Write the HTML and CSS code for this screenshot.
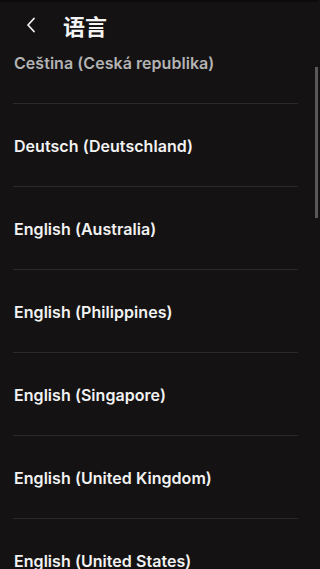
FILE: index.html
```html
<!DOCTYPE html>
<html lang="zh">
<head>
<meta charset="utf-8">
<title>语言</title>
<link rel="stylesheet" href="styles.css">
</head>
<body>
<div class="screen">
  <header class="header">
    <button class="back" aria-label="返回">
      <svg width="10" height="16" viewBox="0 0 10 16"><path d="M8 1.5 L2 8 L8 14.5" fill="none" stroke="#f2f2f2" stroke-width="1.8" stroke-linecap="round" stroke-linejoin="round"/></svg>
    </button>
    <h1 class="title">语言</h1>
  </header>
  <ul class="list">
    <li class="row row-first faded">Ceština (Ceská republika)</li>
    <li class="row">Deutsch (Deutschland)</li>
    <li class="row">English (Australia)</li>
    <li class="row">English (Philippines)</li>
    <li class="row">English (Singapore)</li>
    <li class="row">English (United Kingdom)</li>
    <li class="row">English (United States)</li>
  </ul>
  <div class="scrollbar"></div>
</div>
</body>
</html>
```
FILE: styles.css
```css
* { box-sizing: border-box; }
html, body {
  margin: 0;
  padding: 0;
  background: #141213;
  overflow: hidden;
}
.screen {
  position: relative;
  width: 318px;
  height: 569px;
  overflow: hidden;
  background: #141213;
  border-top: 2px solid #0d0c0c;
  font-family: Inter, "Noto Sans", "Noto Sans CJK SC", sans-serif;
}
.header {
  height: 48px;
  display: flex;
  align-items: center;
  padding-left: 24px;
}
.back {
  background: none;
  border: 0;
  padding: 0;
  width: 14px;
  height: 16px;
  display: flex;
  align-items: center;
  justify-content: center;
  margin-top: -2px;
}
.title {
  margin: 0 0 0 25px;
  font-family: "Noto Sans CJK SC", sans-serif;
  font-size: 22px;
  font-weight: 700;
  color: #f4f4f4;
  line-height: 24px;
  margin-top: -2px;
}
.list {
  list-style: none;
  margin: 0;
  padding: 0 20px 0 13px;
}
.row {
  padding: 32px 0 30px 1px;
  line-height: 20px;
  font-size: 16px;
  font-weight: 600;
  letter-spacing: 0.05px;
  color: #f2f2f2;
  border-bottom: 1px solid #2b2a2a;
  white-space: nowrap;
}
.row-first {
  padding-top: 3px;
}
.faded {
  color: #b3b3b3;
}
.scrollbar {
  position: absolute;
  right: 0;
  top: 65px;
  width: 3px;
  height: 151px;
  background: #5a5959;
}
```
